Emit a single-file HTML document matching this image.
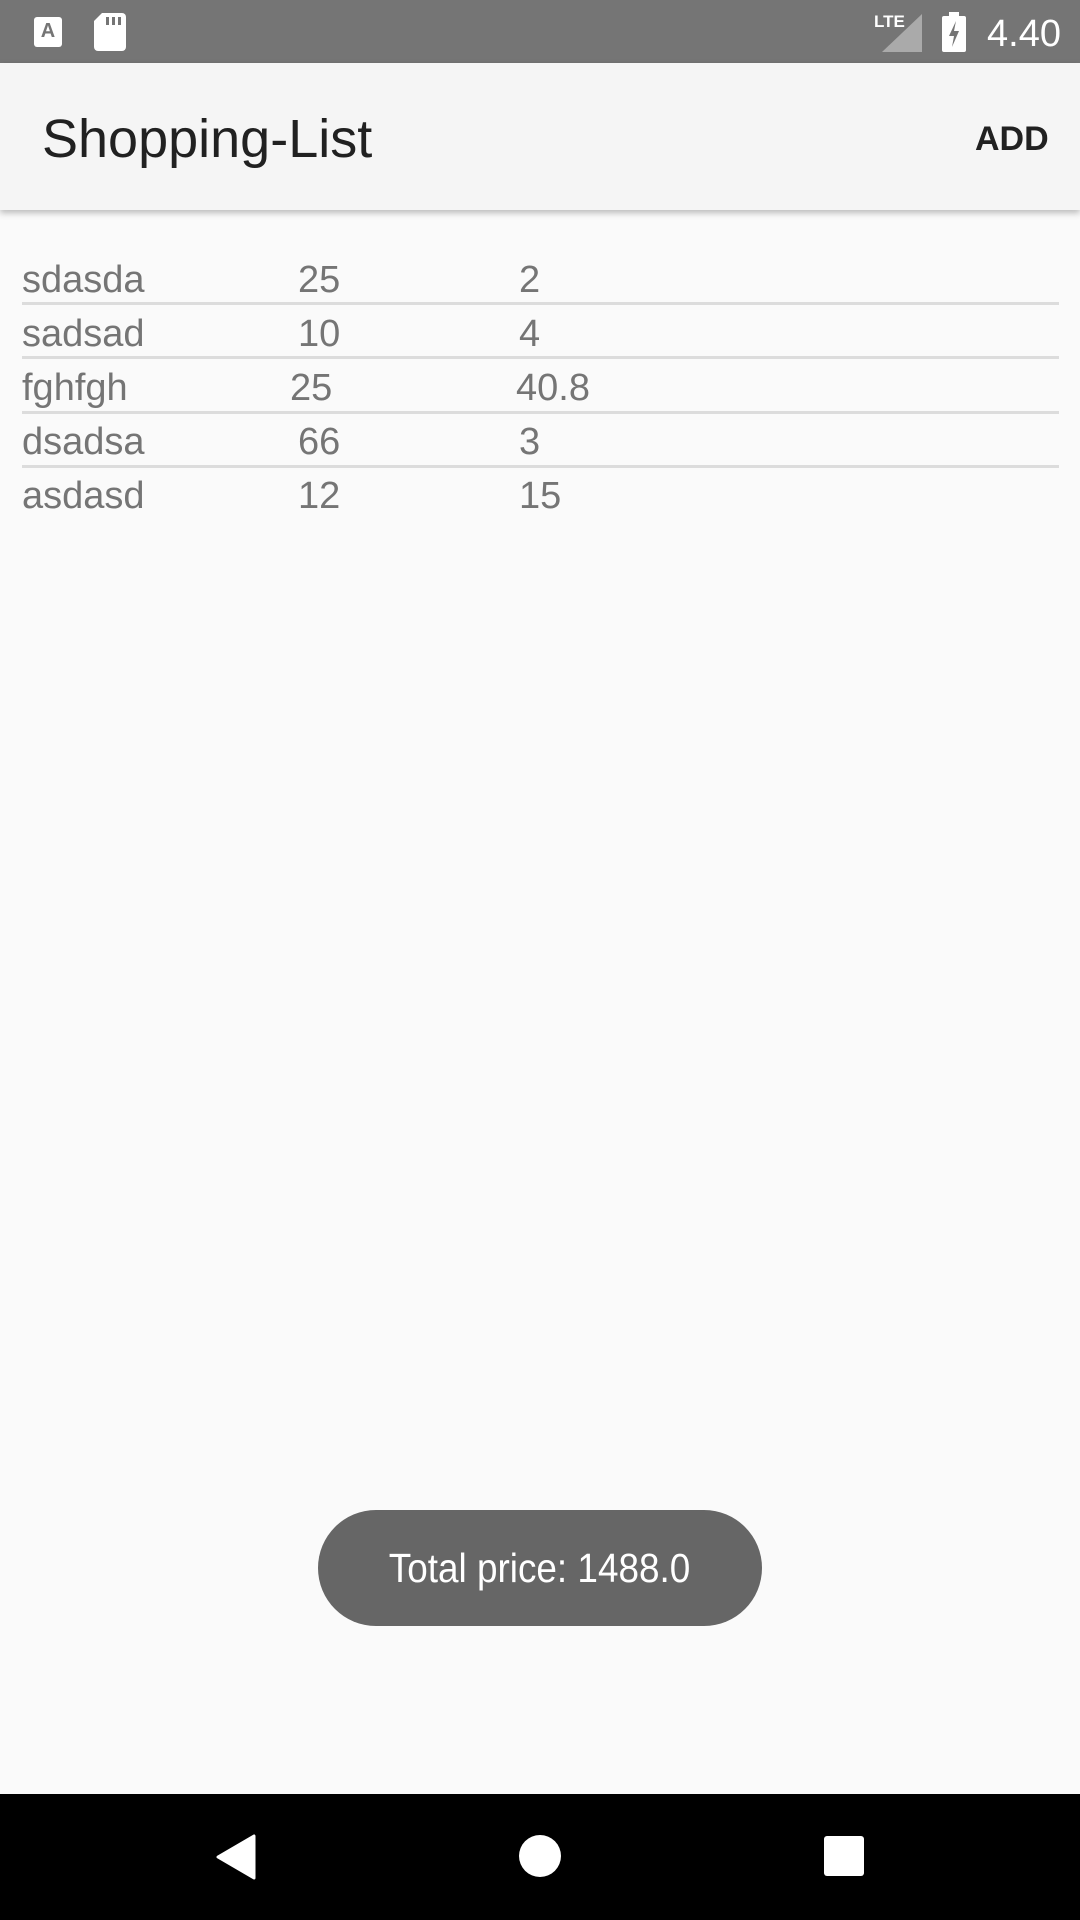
<!DOCTYPE html>
<html><head><meta charset="utf-8"><style>
*{margin:0;padding:0;box-sizing:border-box}
body{width:1080px;height:1920px;background:#fafafa;font-family:"Liberation Sans",sans-serif;position:relative;overflow:hidden}
.sb{position:absolute;left:0;top:0;width:1080px;height:63px;background:#757575}
.ab{position:absolute;left:0;top:63px;width:1080px;height:147px;background:#f5f5f5;box-shadow:0 3px 6px rgba(0,0,0,.25)}
.t{position:absolute;font-size:38px;color:#757575;line-height:1}
.d{position:absolute;left:22px;width:1037px;height:3px;background:#dcdcdc}
</style></head><body>
<div class="sb">
<div style="position:absolute;left:34px;top:17px;width:28px;height:30px;background:#fff;border-radius:3px;color:#757575;font-size:20px;font-weight:bold;text-align:center;line-height:28px">A</div>
<svg style="position:absolute;left:94px;top:13px" width="32" height="38"><path d="M8 0H28a4 4 0 0 1 4 4V34a4 4 0 0 1-4 4H4a4 4 0 0 1-4-4V8Z" fill="#fff"/><rect x="12" y="4" width="3" height="8" fill="#757575"/><rect x="18" y="4" width="3" height="8" fill="#757575"/><rect x="24" y="4" width="3" height="8" fill="#757575"/></svg>
<div style="position:absolute;left:874px;top:12px;color:#fff;font-size:17px;font-weight:bold">LTE</div>
<svg style="position:absolute;left:882px;top:14px" width="40" height="38"><path d="M40 0V38H0Z" fill="#aaa"/></svg>
<svg style="position:absolute;left:942px;top:12px" width="24" height="40"><rect x="0" y="4" width="24" height="36" rx="2" fill="#fff"/><rect x="7" y="0" width="10" height="5" fill="#fff"/><path d="M14 9L7 24H12L10 35L17 19H12Z" fill="#757575"/></svg>
<div style="position:absolute;left:987px;top:13px;color:#fff;font-size:38px">4.40</div>
</div>
<div class="ab">
<div style="position:absolute;left:42px;top:45px;font-size:54px;color:#212121">Shopping-List</div>
<div style="position:absolute;left:975px;top:57px;font-size:34px;font-weight:bold;color:#212121">ADD</div>
</div>
<div class="t" style="left:22px;top:261px">sdasda</div><div class="t" style="left:298px;top:261px">25</div><div class="t" style="left:519px;top:261px">2</div>
<div class="d" style="top:302px"></div>
<div class="t" style="left:22px;top:315px">sadsad</div><div class="t" style="left:298px;top:315px">10</div><div class="t" style="left:519px;top:315px">4</div>
<div class="d" style="top:356px"></div>
<div class="t" style="left:22px;top:369px">fghfgh</div><div class="t" style="left:290px;top:369px">25</div><div class="t" style="left:516px;top:369px">40.8</div>
<div class="d" style="top:411px"></div>
<div class="t" style="left:22px;top:423px">dsadsa</div><div class="t" style="left:298px;top:423px">66</div><div class="t" style="left:519px;top:423px">3</div>
<div class="d" style="top:465px"></div>
<div class="t" style="left:22px;top:477px">asdasd</div><div class="t" style="left:298px;top:477px">12</div><div class="t" style="left:519px;top:477px">15</div>
<div style="position:absolute;left:318px;top:1510px;width:444px;height:116px;background:#666;border-radius:58px;color:#fff;font-size:41px;text-align:center;line-height:116px"><span style="display:inline-block;transform:scaleX(0.9)">Total price: 1488.0</span></div>
<div style="position:absolute;left:0;top:1794px;width:1080px;height:126px;background:#000">
<svg style="position:absolute;left:216px;top:40px" width="40" height="46"><path d="M38 2V44L2 23Z" fill="#fff" stroke="#fff" stroke-width="3" stroke-linejoin="round"/></svg>
<div style="position:absolute;left:519px;top:41px;width:42px;height:42px;border-radius:50%;background:#fff"></div>
<div style="position:absolute;left:824px;top:42px;width:40px;height:40px;border-radius:3px;background:#fff"></div>
</div>
</body></html>
